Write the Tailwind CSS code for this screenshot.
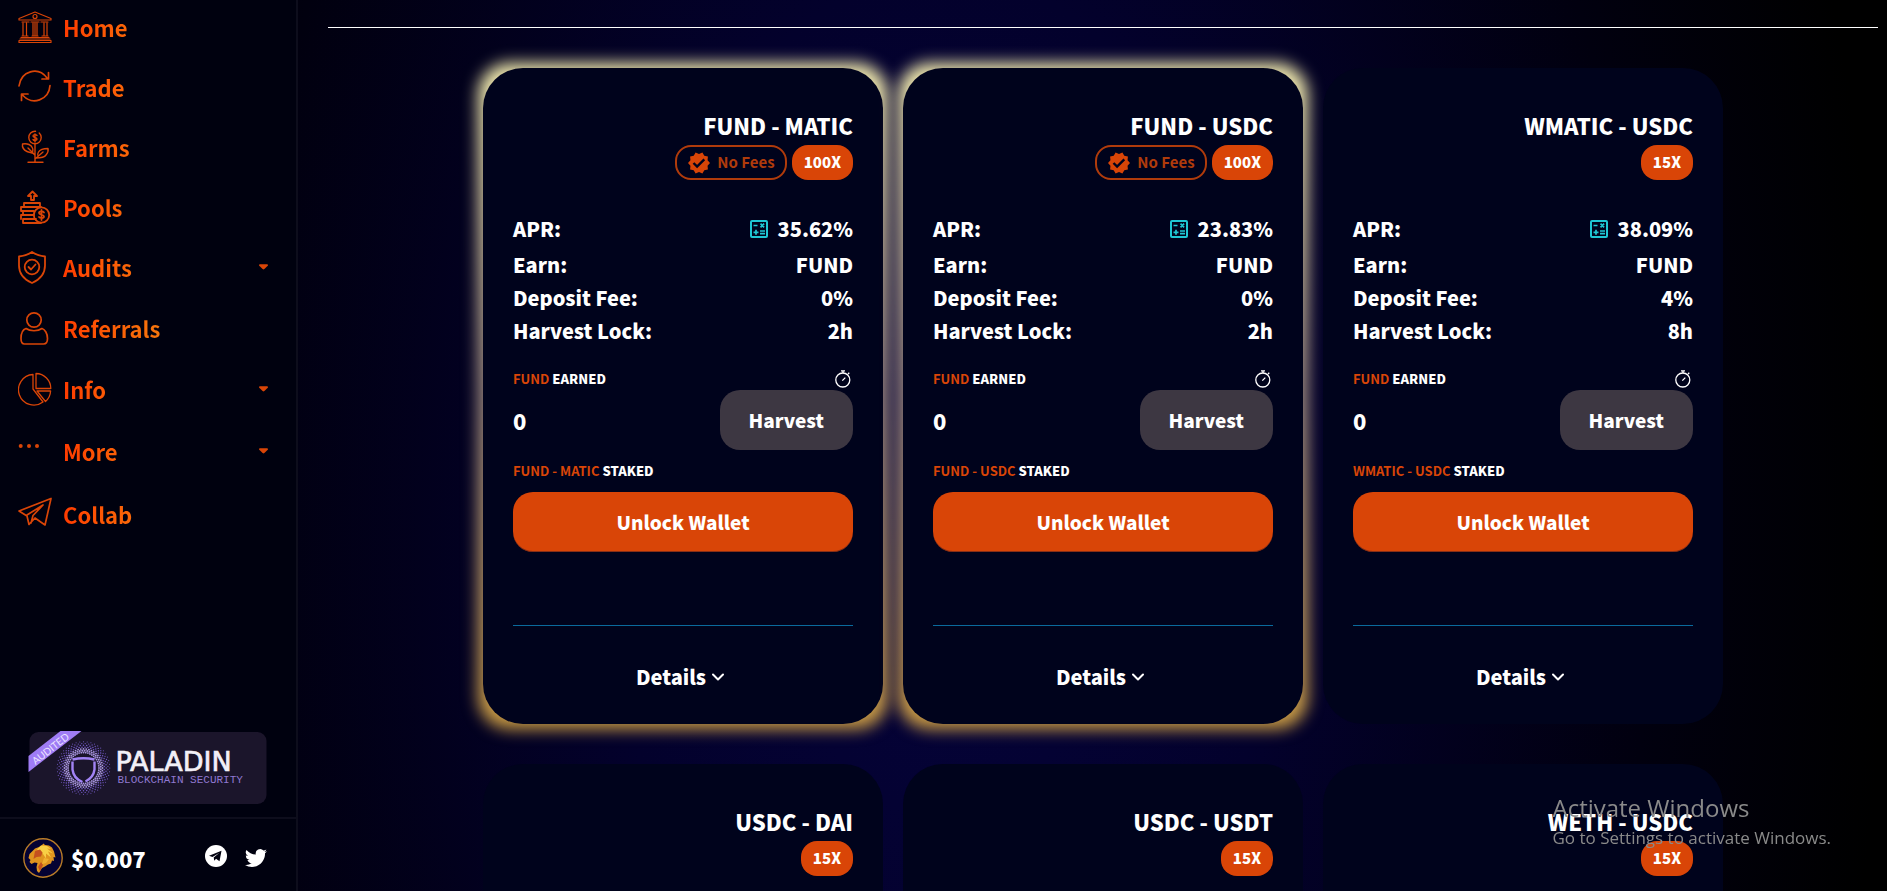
<!DOCTYPE html>
<html lang="en">
<head>
<meta charset="utf-8">
<title>Farms</title>
<script src="https://cdn.jsdelivr.net/npm/@tailwindcss/browser@4"></script>
</head>
<body class="h-screen overflow-hidden bg-black font-['Noto_Sans_CJK_SC',sans-serif] text-white">
<svg class="hidden">
  <symbol id="calc" viewBox="0 0 18 18"><rect x="1" y="1" width="16" height="16" rx="1" fill="none" stroke="#1fc7d4" stroke-width="2"/><path d="M3.500 5.500h4M10.500 3.700l3.600 3.600M14.100 3.700l-3.600 3.600M3.500 12.300h5M6 9.800v5M10 11h5M10 13.700h5" stroke="#1fc7d4" stroke-width="1.700" fill="none"/></symbol>
  <symbol id="watch" viewBox="0 0 18 18"><g fill="none" stroke="#fff" stroke-width="1.300"><circle cx="8.800" cy="10" r="7"/><path d="M7 .8h4M9 1v2M14 4l1.300-1.300M8.300 10.600l3-3"/></g></symbol>
  <symbol id="caret" viewBox="0 0 10 6"><path d="M1 0h8q1 0 1 1.200L6 5.300q-1 .8-2 0L0 1.200Q0 0 1 0z" fill="#d94507"/></symbol>
  <symbol id="seal" viewBox="0 0 24 24"><path fill="#d94507" d="M23 12l-2.440-2.780.34-3.680-3.610-.82-1.890-3.180L12 3 8.600 1.540 6.710 4.720l-3.610.81.340 3.680L1 12l2.440 2.780-.34 3.690 3.610.82 1.890 3.180L12 21l3.400 1.460 1.890-3.180 3.610-.82-.34-3.680L23 12z"/><path fill="none" stroke="#00031c" stroke-width="2.400" d="M6.500 12l3.600 3.600 7.200-7.200"/></symbol>
</svg>
<div class="flex h-full bg-[radial-gradient(ellipse_50%_180%_at_50%_60%,#05033a_0%,#03012c_35%,#01000f_75%,#000000_100%)]">
  <aside class="flex w-[298px] shrink-0 flex-col border-r-2 border-[#0d0d1c] bg-[#00010f]">
    <nav class="-mt-[3px] flex flex-col" id="nav"></nav>
    <a href="#" class="mx-[29px] mt-auto block h-[72px]" aria-label="Audited by Paladin Blockchain Security">
      <svg class="h-full w-full overflow-visible" viewBox="0 0 237 72">
        <rect width="237" height="72" rx="9" fill="#1b152b"/>
        <path d="M31-1H52L-1 40V24z" fill="#9f7cf5"/>
        <text transform="translate(6 33) rotate(-38)" font-family="Lato" font-size="10" fill="#ece4ff">AUDITED</text>
        <g id="dots"></g>
        <path d="M43 27.500q11-2.500 22 0M43 29.500v8q1 9 10 12.500M65 29.500v8q-1 8-9 12" fill="none" stroke="#a283f5" stroke-width="2.400"/>
        <text x="86" y="39" font-family="DejaVu Sans" font-size="27" fill="#f2f0f7" stroke="#f2f0f7" stroke-width="0.7">PALADIN</text>
        <text x="88" y="51" font-family="Liberation Mono" font-size="11" fill="#9078d0">BLOCKCHAIN SECURITY</text>
      </svg>
    </a>
    <div class="mt-[13px] flex h-[74px] items-center border-t-2 border-[#0d0d1c] pt-2 pr-[29px] pb-[2px] pl-[23px]">
      <svg class="h-10 w-10" viewBox="0 0 40 40"><circle cx="20" cy="20" r="19.200" fill="#040233" stroke="#b97c28" stroke-width="1.400"/><path fill="#e0941f" d="M12 10.500l4-1.500 3-2 1.500-1.500 1.500 1.500 4 .5 3 2 2 4 1.500 6-2-.5.500 4-2-.5-1 3-3 1-3 2-3 1.500-3 5-2-2-.5-4 1-4-3-.5-3 1.500-2-2 1-2-2-2 1-4z"/><path fill="#f8cf45" d="M18 7.500l6 .5 4 3-4-.5 6 5-5-2 3 6-5-4 0 5-4-6-5-3z"/><path fill="#c4501f" d="M12 13l5-1.500 2.500 3-1.500 4-4.500.5-3 2zM18 24l2 3-3 6-2-4z"/><path fill="#f0b030" d="M21 20l5 1-3 4-4 1z"/></svg>
      <span class="ml-2 text-[22px] leading-8 font-black">$0.007</span>
      <a href="#" class="mb-1 ml-auto" aria-label="Telegram"><svg class="h-[22px] w-[22px]" viewBox="0 0 22 22"><circle cx="11" cy="11" r="11" fill="#fff"/><path fill="#00010f" d="M4 10.700L16.500 5.800 14.500 16.300 11 13.800 9.300 15.700 8.700 12.500 14.500 7.800 7.500 12z"/></svg></a>
      <a href="#" class="ml-[18px]" aria-label="Twitter"><svg class="h-[22px] w-[22px]" viewBox="0 0 24 24"><path fill="#fff" d="M23.950 4.570a10 10 0 01-2.820.77 4.960 4.960 0 002.160-2.720c-.95.560-2 .96-3.130 1.190a4.920 4.920 0 00-8.380 4.480C7.690 8.100 4.070 6.130 1.640 3.160a4.930 4.930 0 001.520 6.570 4.900 4.900 0 01-2.230-.61v.06a4.920 4.920 0 003.950 4.830 5 5 0 01-2.210.08 4.940 4.940 0 004.600 3.420A9.870 9.870 0 010 19.540a14 14 0 007.550 2.210c9.140 0 14.300-7.720 14.300-14.420l-.02-.63a10 10 0 002.460-2.550z"/></svg></a>
    </div>
  </aside>
  <main class="min-w-0 flex-1 overflow-hidden pr-[9px] pl-[30px]">
    <hr class="mt-[27px] border-t border-white">
    <div class="mt-10 flex flex-wrap justify-center gap-x-5 gap-y-10" id="cards"></div>
  </main>
</div>
<div class="pointer-events-none fixed right-[52px] bottom-[39px] font-['Open_Sans',sans-serif] text-[#8a8a8a]">
  <p class="text-2xl leading-8">Activate Windows</p>
  <p class="pr-1 text-[17px] leading-7">Go to Settings to activate Windows.</p>
</div>
<script>
const svg = (b, w = 1.5) => `<svg class="h-[34px] w-[34px] shrink-0" viewBox="0 0 34 34" fill="none" stroke="#d94507" stroke-width="${w}" stroke-linejoin="round" stroke-linecap="round">${b}</svg>`;
const icons = {
  Home: svg('<path d="M1 8.500L17 2l16 6.500v1.500H1zM1 30.500h32v2H1zM3 27.500h28M2 29h30M4 12h7M13 12h8M23 12h7M5 13v13M8.500 13v13M15 13v13M17 13v13M19 13v13M26 13v13M29 13v13M4 26h6M14 26h6M24 26h6"/><circle cx="17" cy="6.500" r="2"/>', 1.2),
  Trade: svg('<path d="M1 16C3 1 20-4 29 8M30.500 2.500v6.500h-6.500M32 15.500C31 30 14 36 5 25.500M3.500 30.500v-6.500h6.500"/>', 1.7),
  Farms: svg('<circle cx="17" cy="7.500" r="6.200" stroke-dasharray="35 4" stroke-dashoffset="6"/><path d="M19 5.500c-1-1.500-4-1-4 .5s4 1.500 4 3-3 2-4 .5M17 4v8M17 14v18M10 32.300h15M17 25c-2-3-5-2-8-3.500C6 20 4 17 4.500 14c5-1 9 1 10 4 1 2 0 3 0 5M10 18l7 7M18 28c4 0 8 0 10-3 2-2 2.500-4 2-6.500-4 0-8 1-9.500 3.500-1.200 2-1 3-.5 4M25 22l-8 7"/>', 1.4),
  Pools: svg('<path d="M13 10v-4h-3l4.500-4.500L19 6h-3v4zM6 16v-3h16v3M3 17h20M3 17v4h13M3 21h13M5 21v4h11M3 25v4M3 25h13M5 29h13M5 29v4h18"/><circle cx="23.500" cy="25" r="7.700"/><path d="M26 22.500c-1-1.500-5-1.500-5 .5s5 1.500 5 3.500-4 2-5 .500M23.500 20v10"/>', 1.8),
  Audits: svg('<path d="M14 2c4 3 8 4 13 4.500v9c0 9-5 14-13 17.500C6 29.500 1 24.500 1 15.500v-9C6 6 10 5 14 2z"/><circle cx="14" cy="17" r="7.300"/><path d="M10.500 17l2.500 2.500 4.500-5"/>', 1.8),
  Referrals: svg('<circle cx="16" cy="9" r="7.200"/><path d="M8 17.500c4 3 12 3 16 0 3 1 5.500 5 5.500 10 0 4-1 5.500-4 5.500h-19C4 33 3 31.500 3 27.500c0-5 2-9 5-10z"/>', 1.7),
  Info: svg('<path d="M15 2.500A15.300 15.300 0 1 0 25 30L15 17zM18 1.500V16.500H32.800A15 15 0 0 0 18 1.500zM19 19H32.600A15 15 0 0 1 27.500 29.500z"/>', 1.3),
  More: svg('<g fill="#d94507" stroke="none"><circle cx="2.700" cy="12" r="2"/><circle cx="11" cy="12" r="2"/><circle cx="19" cy="12" r="2"/></g>'),
  Collab: svg('<path d="M1 14L33 1.500 27 28 17 21 11 27.500 9 19zM9 18L25 8 15 18.500 13 26"/>', 1.7)
};
const items = [['Home', 'h-[60px]'], ['Trade', 'h-[60px]'], ['Farms', 'h-[60px]'], ['Pools', 'h-[60px]'], ['Audits', 'h-[60px]', 1], ['Referrals', 'h-[62px]'], ['Info', 'h-[60px]', 1], ['More', 'h-[64px]', 1], ['Collab', 'h-[62px]']];
document.getElementById('nav').innerHTML = items.map(([n, h, c]) => `<a href="#" class="flex ${h} items-center pr-[28px] pl-[18px]">${icons[n]}<span class="ml-[11px] bg-linear-to-r from-[#ff3a00] to-[#f57c0e] to-[110px] bg-clip-text text-[22px] leading-8 font-bold text-transparent">${n}</span>${c ? '<svg class="ml-auto h-[6px] w-[9px]"><use href="#caret"/></svg>' : ''}</a>`).join('');
let d = '';
for (let r = 0; r < 7; r++) {
  const R = 15.5 + r * 1.8;
  for (let i = 0; i < 44; i++) {
    const a = (i + (r % 2) / 2) * Math.PI / 22;
    d += `<circle cx="${(54 + R * Math.cos(a)).toFixed(1)}" cy="${(36 + R * Math.sin(a)).toFixed(1)}" r="${(1 - Math.abs(r - 1) * .09).toFixed(2)}" fill="${r < 3 ? '#a794dd' : '#7259c4'}"/>`;
  }
}
document.getElementById('dots').innerHTML = d;
const row = (k, v, h = 'h-[33px]') => `<div class="flex ${h} items-center justify-between"><dt>${k}:</dt><dd class="flex items-center">${v}</dd></div>`;
const cards = [['FUND - MATIC', '100X', '35.62%', '0%', '2h', 1], ['FUND - USDC', '100X', '23.83%', '0%', '2h', 1], ['WMATIC - USDC', '15X', '38.09%', '4%', '8h'], ['USDC - DAI', '15X'], ['USDC - USDT', '15X'], ['WETH - USDC', '15X']];
const body = (n, apr, fee, lock) => `<dl class="mt-[29px] text-[20px] font-black">${row('APR', '<button class="mr-[10px]" aria-label="ROI calculator"><svg class="block h-[18px] w-[18px]"><use href="#calc"/></svg></button>' + apr, 'h-[39px]')}${row('Earn', 'FUND')}${row('Deposit Fee', fee)}${row('Harvest Lock', lock)}</dl>
<div class="mt-[22px] mb-px flex h-5 items-center justify-between text-[13px] font-black"><span><span class="font-bold text-[#d94507]">FUND</span> EARNED</span><svg class="mr-[1px] h-[18px] w-[18px]"><use href="#watch"/></svg></div>
<div class="flex items-center justify-between"><span class="text-[22px] font-black">0</span><button class="h-[60px] rounded-[20px] bg-[#3d3742] px-[29px] text-[19px] font-black">Harvest</button></div>
<div class="mt-[11px] h-5 text-[13px] leading-5 font-black"><span class="font-bold text-[#d94507]">${n}</span> STAKED</div>
<button class="mt-[11px] h-[60px] w-full rounded-[20px] bg-[#d94507] text-[19px] font-black shadow-[inset_0_-1px_0_rgba(14,14,44,0.4)]">Unlock Wallet</button>
<hr class="mt-[73px] border-t border-[#0a6a9c]">
<button class="mx-auto mt-[35px] flex h-8 items-center pr-[6px] text-[20px] font-black">Details<svg class="ml-[6px] h-[8px] w-[12px]" viewBox="0 0 12 8" fill="none" stroke="#fff" stroke-width="2" stroke-linecap="round" stroke-linejoin="round"><path d="M1 1.500l5 5 5-5"/></svg></button>`;
document.getElementById('cards').innerHTML = cards.map(([n, m, apr, fee, lock, hot]) => `<article class="relative w-[400px]">
${hot ? '<div class="absolute -inset-[5px] rounded-[32px] bg-linear-to-b from-[#f5eeb0] via-[#a08c80] to-[#cc9c40] blur-[8px]"></div>' : ''}
<div class="relative rounded-[40px] bg-[#00031c] px-[30px] pt-[41px] pb-[31px]">
<h2 class="text-right text-[22px] leading-8 font-black">${n}</h2>
<div class="mt-1 flex justify-end gap-[5px]">${hot ? '<span class="flex h-[35px] items-center rounded-2xl border-2 border-[#b03b0b] px-[10px] text-[15px] font-bold text-[#b03b0b]"><svg class="mr-[6px] h-6 w-6"><use href="#seal"/></svg>No Fees</span>' : ''}<span class="flex h-[35px] items-center rounded-2xl bg-[#d94507] px-3 text-[15px] font-black">${m}</span></div>
${apr ? body(n, apr, fee, lock) : '<div class="h-[513px]"></div>'}
</div></article>`).join('');
</script>
</body>
</html>
